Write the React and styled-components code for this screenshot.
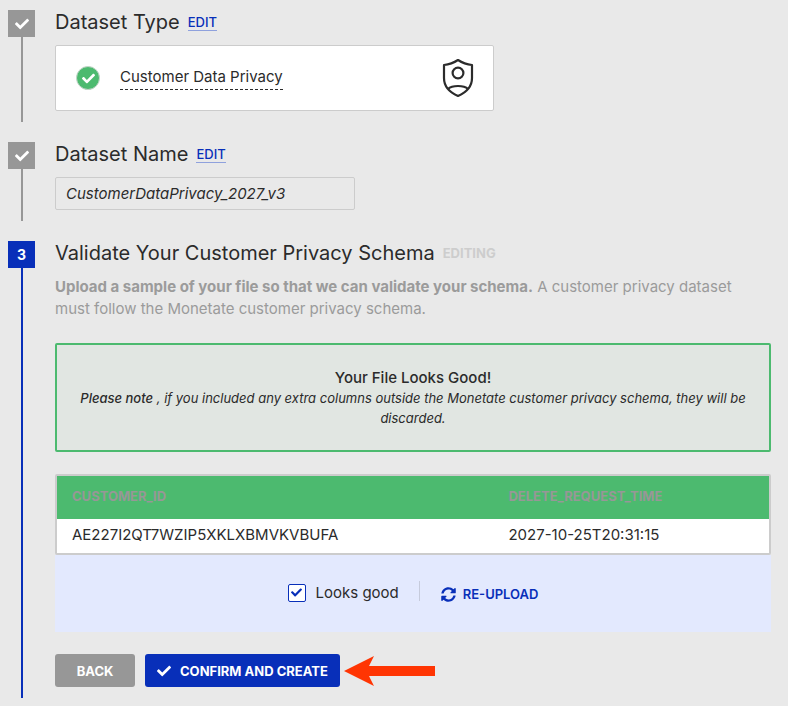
import React, { useState } from "react";
import styled, { createGlobalStyle } from "styled-components";
import { FaCheck, FaSyncAlt } from "react-icons/fa";

const GlobalStyle = createGlobalStyle`
  * { box-sizing: border-box; }
  body {
    margin: 0;
    background: #e9e9e9;
    color: #2b2b2b;
    font-family: Inter, "Liberation Sans", sans-serif;
    font-size: 15px;
  }
  button, input { font-family: inherit; }
`;

const blue = "#082fb9";
const green = "#4cba6f";
const gray = "#979797";

const Wizard = styled.main`
  display: flex;
  flex-direction: column;
  gap: 20px;
  padding: 10px 17px 8px 8px;
`;

const Step = styled.section`
  display: flex;
  gap: 20px;
`;

const Rail = styled.div`
  display: flex;
  flex: 0 0 27px;
  flex-direction: column;
  align-items: center;
  color: ${(p) => (p.$active ? blue : gray)};

  &::after {
    content: "";
    flex: 1;
    width: 2px;
    background: currentColor;
  }
`;

const Marker = styled.div`
  display: flex;
  align-items: center;
  justify-content: center;
  width: 27px;
  height: 27px;
  background: ${(p) => (p.$active ? blue : gray)};
  color: #fff;
  font-size: 14px;
  font-weight: 700;
`;

const Content = styled.div`
  flex: 1;
  min-width: 0;
  padding-bottom: 11px;
`;

const Heading = styled.header`
  display: flex;
  align-items: center;
  gap: 8px;
  height: 27px;
  margin-bottom: 8px;
`;

const Title = styled.h2`
  margin: 0;
  font-size: 20px;
  font-weight: 400;
  line-height: 24px;
  padding-bottom: 3px;
`;

const EditLink = styled.a`
  margin-bottom: 2px;
  border-bottom: 1px solid #8fa1dd;
  color: ${blue};
  font-size: 13px;
  font-weight: 500;
  line-height: 16px;
  text-decoration: none;
`;

const Status = styled.span`
  color: #cdcdcd;
  font-size: 13px;
  font-weight: 700;
  line-height: 16px;
  padding-bottom: 3px;
`;

const TypeCard = styled.div`
  display: flex;
  align-items: center;
  max-width: 439px;
  height: 66px;
  padding: 0 19px 0 20px;
  border: 1px solid #ccc;
  border-radius: 2px;
  background: #fff;
`;

const Selected = styled.span`
  display: flex;
  align-items: center;
  justify-content: center;
  width: 24px;
  height: 24px;
  margin-right: 20px;
  border: 1px solid #c4d4c9;
  border-radius: 50%;
  background: ${green};
  color: #fff;
  font-size: 13px;
`;

const TypeName = styled.span`
  margin-right: auto;
  margin-bottom: 2px;
  border-bottom: 1px dashed #2b2b2b;
  line-height: 24px;
`;

const NameInput = styled.input`
  display: block;
  width: 300px;
  max-width: 100%;
  height: 33px;
  padding: 0 10px;
  border: 1px solid #ccc;
  border-radius: 2px;
  background: transparent;
  color: #2b2b2b;
  font-size: 15px;
  font-style: italic;
`;

const Description = styled.p`
  margin: 0 0 23px;
  padding-right: 16px;
  color: #9b9b9b;
  line-height: 22px;
`;

const Strong = styled.strong`
  font-weight: ${(p) => p.$weight || 700};
`;

const Notice = styled.div`
  margin-bottom: 22px;
  padding: 23px 20px 22px;
  border: 2px solid ${green};
  border-radius: 2px;
  background: #e1e6e2;
  line-height: 20px;
  text-align: center;
`;

const NoticeTitle = styled.h3`
  margin: 0;
  font-size: 15px;
  font-weight: 500;
`;

const NoticeText = styled.p`
  margin: 0;
  font-size: 13px;
  font-style: italic;
`;

const TableFrame = styled.div`
  border: 2px solid #ccc;
  border-radius: 2px;
  background: #fff;
`;

const Table = styled.table`
  width: 100%;
  border-collapse: collapse;
  table-layout: fixed;
`;

const HeadCell = styled.th`
  width: ${(p) => p.$width};
  height: 43px;
  padding: 0 15px 3px;
  background: ${green};
  color: ${gray};
  font-size: 13px;
  font-weight: 700;
  text-align: left;
`;

const Cell = styled.td`
  height: 34px;
  padding: 0 15px 4px;
`;

const Review = styled.div`
  display: flex;
  align-items: flex-start;
  justify-content: center;
  height: 77px;
  margin-bottom: 22px;
  padding-top: 26px;
  background: #e3e9fe;
`;

const CheckLabel = styled.label`
  display: flex;
  align-items: center;
  gap: 10px;
  height: 20px;
  padding-right: 20px;
  border-right: 1px solid #c6cbdc;
  cursor: pointer;
`;

const CheckControl = styled.span`
  display: grid;
  place-items: center;
  width: 18px;
  height: 18px;
  margin-top: 3px;
  color: ${blue};
  font-size: 11px;

  > * { grid-area: 1 / 1; }
  svg { pointer-events: none; }
`;

const Checkbox = styled.input`
  appearance: none;
  width: 18px;
  height: 18px;
  margin: 0;
  border: 1px solid ${blue};
  border-radius: 2px;
  background: #fff;
`;

const LabelText = styled.span`
  padding-top: 3px;
  line-height: 20px;
`;

const UploadButton = styled.button`
  display: flex;
  align-items: center;
  gap: 7px;
  height: 24px;
  padding: 2px 0 0 21px;
  border: 0;
  background: none;
  color: ${blue};
  font-size: 13px;
  font-weight: 600;
  cursor: pointer;

  svg { font-size: 15px; }
`;

const Actions = styled.div`
  display: flex;
  align-items: center;
  gap: 10px;
`;

const Button = styled.button`
  display: flex;
  align-items: center;
  justify-content: center;
  gap: 9px;
  min-width: 80px;
  height: 33px;
  padding: 0 12px;
  border: 0;
  border-radius: 3px;
  background: ${(p) => (p.$primary ? blue : gray)};
  color: #fff;
  font-size: 13px;
  font-weight: 700;
  cursor: pointer;

  svg { font-size: 14px; }
`;

const ActionPointer = styled.div`
  display: flex;
  align-items: center;
  margin-left: -6px;
`;

function PrivacyIcon() {
  return (
    <svg width="32" height="40" viewBox="0 0 32 40" fill="none" stroke="#2b2b2b" strokeWidth="2.200" strokeLinejoin="round" aria-hidden="true">
      <path d="M16 2C12 4.700 6.500 6.600 2 7v13c0 8.500 6 14.500 14 18 8-3.500 14-9.500 14-18V7C25.500 6.600 20 4.700 16 2Z" />
      <circle cx="16" cy="15" r="5.400" />
      <path d="M6 31c2.500-2.400 6-3 10-3s7.500.6 10 3" />
    </svg>
  );
}

function ArrowIcon() {
  return (
    <svg width="92" height="30" viewBox="0 0 92 30" aria-hidden="true">
      <path d="M0 15 30 0 25 10H91V20H25L30 30Z" fill="#ff3503" />
    </svg>
  );
}

function WizardStep({ title, marker, active, aside, children }) {
  return (
    <Step>
      <Rail $active={active}>
        <Marker $active={active}>{marker}</Marker>
      </Rail>
      <Content>
        <Heading>
          <Title>{title}</Title>
          {aside}
        </Heading>
        {children}
      </Content>
    </Step>
  );
}

export default function App() {
  const [approved, setApproved] = useState(true);
  const [name, setName] = useState("CustomerDataPrivacy_2027_v3");

  return (
    <>
      <GlobalStyle />
      <Wizard>
        <WizardStep title="Dataset Type" marker={<FaCheck />} aside={<EditLink href="#type">EDIT</EditLink>}>
          <TypeCard>
            <Selected><FaCheck /></Selected>
            <TypeName>Customer Data Privacy</TypeName>
            <PrivacyIcon />
          </TypeCard>
        </WizardStep>

        <WizardStep title="Dataset Name" marker={<FaCheck />} aside={<EditLink href="#name">EDIT</EditLink>}>
          <NameInput aria-label="Dataset Name" value={name} onChange={(e) => setName(e.target.value)} />
        </WizardStep>

        <WizardStep active title="Validate Your Customer Privacy Schema" marker="3" aside={<Status>EDITING</Status>}>
          <Description>
            <Strong>Upload a sample of your file so that we can validate your schema.</Strong> A customer
            privacy dataset must follow the Monetate customer privacy schema.
          </Description>
          <Notice>
            <NoticeTitle>Your File Looks Good!</NoticeTitle>
            <NoticeText>
              <Strong $weight={500}>Please note</Strong> , if you included any extra columns outside the
              Monetate customer privacy schema, they will be discarded.
            </NoticeText>
          </Notice>
          <TableFrame>
            <Table>
              <thead>
                <tr>
                  <HeadCell $width="61.3%">CUSTOMER_ID</HeadCell>
                  <HeadCell>DELETE_REQUEST_TIME</HeadCell>
                </tr>
              </thead>
              <tbody>
                <tr>
                  <Cell>AE227I2QT7WZIP5XKLXBMVKVBUFA</Cell>
                  <Cell>2027-10-25T20:31:15</Cell>
                </tr>
              </tbody>
            </Table>
          </TableFrame>
          <Review>
            <CheckLabel>
              <CheckControl>
                <Checkbox type="checkbox" checked={approved} onChange={(e) => setApproved(e.target.checked)} />
                {approved && <FaCheck />}
              </CheckControl>
              <LabelText>Looks good</LabelText>
            </CheckLabel>
            <UploadButton type="button">
              <FaSyncAlt />
              RE-UPLOAD
            </UploadButton>
          </Review>
          <Actions>
            <Button type="button">BACK</Button>
            <Button type="button" $primary>
              <FaCheck />
              CONFIRM AND CREATE
            </Button>
            <ActionPointer><ArrowIcon /></ActionPointer>
          </Actions>
        </WizardStep>
      </Wizard>
    </>
  );
}
